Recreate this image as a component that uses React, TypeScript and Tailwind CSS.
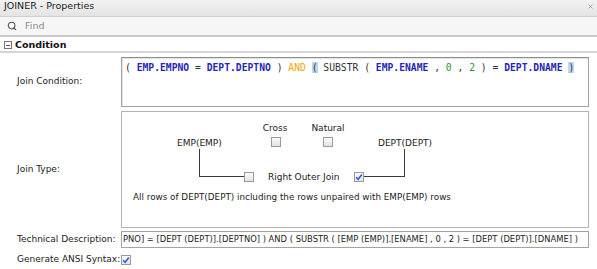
import { Search, X } from "lucide-react";

const sans = "font-['DejaVu_Sans',sans-serif]";

function Check({ checked = false }: { checked?: boolean }) {
  return (
    <div className="flex h-[10px] w-[10px] items-center justify-center border border-[#9a9a9a] bg-gradient-to-b from-[#fbfbfb] to-[#e3e3e3]">
      {checked ? (
        <svg width="8" height="8" viewBox="0 0 8 8">
          <path d="M1.2 4.2 L3.1 6.2 L6.9 1.6" fill="none" stroke="#2a5fd0" strokeWidth="1.6" />
        </svg>
      ) : null}
    </div>
  );
}

function JoinCondition() {
  const blue = "font-bold text-[#2727b5]";
  return (
    <div className="whitespace-pre pl-[3px] pt-[3px] font-['DejaVu_Sans_Mono',monospace] text-[9.7px] leading-[13px] text-[#333]">
      {"( "}
      <span className={blue}>EMP.EMPNO</span>
      {" = "}
      <span className={blue}>DEPT.DEPTNO</span>
      {" ) "}
      <span className="text-[#f2a500]">AND</span>{" "}
      <span className="bg-[#b9d9f3]">(</span>
      {" SUBSTR ( "}
      <span className={blue}>EMP.ENAME</span>
      {" , "}
      <span className="text-[#2f8f2f]">0</span>
      {" , "}
      <span className="text-[#2f8f2f]">2</span>
      {" ) = "}
      <span className={blue}>DEPT.DNAME</span>{" "}
      <span className="bg-[#b9d9f3]">)</span>
    </div>
  );
}

function JoinDiagram() {
  return (
    <div className="relative h-full w-full text-[9px] text-[#222]">
      <span className="absolute left-[140px] top-[10px] w-[26px] text-center">Cross</span>
      <div className="absolute left-[149px] top-[25px]">
        <Check />
      </div>
      <span className="absolute left-[189px] top-[10px] w-[34px] text-center">Natural</span>
      <div className="absolute left-[201px] top-[25px]">
        <Check />
      </div>

      <span className="absolute left-[55px] top-[25px]">EMP(EMP)</span>
      <span className="absolute left-[256px] top-[25px]">DEPT(DEPT)</span>

      <div className="absolute left-[77px] top-[37px] h-[28px] w-[45px] border-b border-l border-[#3a3a3a]" />
      <div className="absolute left-[122px] top-[60px]">
        <Check />
      </div>
      <span className="absolute left-[146px] top-[59px]">Right Outer Join</span>
      <div className="absolute left-[232px] top-[60px]">
        <Check checked />
      </div>
      <div className="absolute left-[242px] top-[37px] h-[28px] w-[41px] border-b border-r border-[#3a3a3a]" />

      <span className="absolute left-[11px] top-[79px] text-[8.8px]">
        All rows of DEPT(DEPT) including the rows unpaired with EMP(EMP) rows
      </span>
    </div>
  );
}

export default function App() {
  return (
    <div className={`h-[269px] w-[597px] overflow-hidden bg-white ${sans} text-[9px] text-[#222]`}>
      <div className="flex h-[17px] items-center justify-between border-b border-[#cfcfcf] bg-gradient-to-b from-[#f2f2f2] to-[#e4e4e4] pb-[3px] pl-[4px] pr-[3px]">
        <span className="text-[9.5px] text-[#1a1a1a]">JOINER - Properties</span>
        <X size={7} className="text-[#9a9a9a]" strokeWidth={2.5} />
      </div>

      <div className="flex h-[20px] items-center gap-[8px] border-b-2 border-[#c8c8c8] bg-[#f6f6f6] pl-[7px]">
        <Search size={10} strokeWidth={2.6} className="text-[#555]" />
        <span className="text-[9.5px] text-[#8a8a8a]">Find</span>
      </div>

      <div className="flex h-[16px] items-center gap-[3px] border-b-2 border-[#d6d6d6] pl-[4px] pt-[2px]">
        <div className="flex h-[8px] w-[8px] items-center justify-center border border-[#777]">
          <div className="h-px w-[4px] bg-[#555]" />
        </div>
        <span className="text-[9.5px] font-bold text-[#111]">Condition</span>
      </div>

      <div className="mt-[4px] grid grid-cols-[121px_468px] grid-rows-[50px_117px_16px_auto] gap-y-[4px]">
        <div className="flex items-center pl-[17px]">Join Condition:</div>
        <div className="border border-[#a3a3a3] border-t-[#8e8e8e] bg-white shadow-[inset_1px_1px_0_#e4e4e4]">
          <JoinCondition />
        </div>

        <div className="flex items-center pl-[17px]">Join Type:</div>
        <div className="border border-[#b5b5b5] bg-white">
          <JoinDiagram />
        </div>

        <div className="-mt-px flex items-center pl-[17px]">Technical Description:</div>
        <div className="-mt-px flex items-center overflow-hidden whitespace-nowrap border border-[#a3a3a3] bg-white pl-px text-[8.4px] text-[#222]">
          PNO] = [DEPT (DEPT)].[DEPTNO] ) AND ( SUBSTR ( [EMP (EMP)].[ENAME] , 0 , 2 ) = [DEPT (DEPT)].[DNAME] )
        </div>

        <div className="mt-px flex items-center pl-[17px]">Generate ANSI Syntax:</div>
        <div className="mt-px flex items-center">
          <Check checked />
        </div>
      </div>
    </div>
  );
}
